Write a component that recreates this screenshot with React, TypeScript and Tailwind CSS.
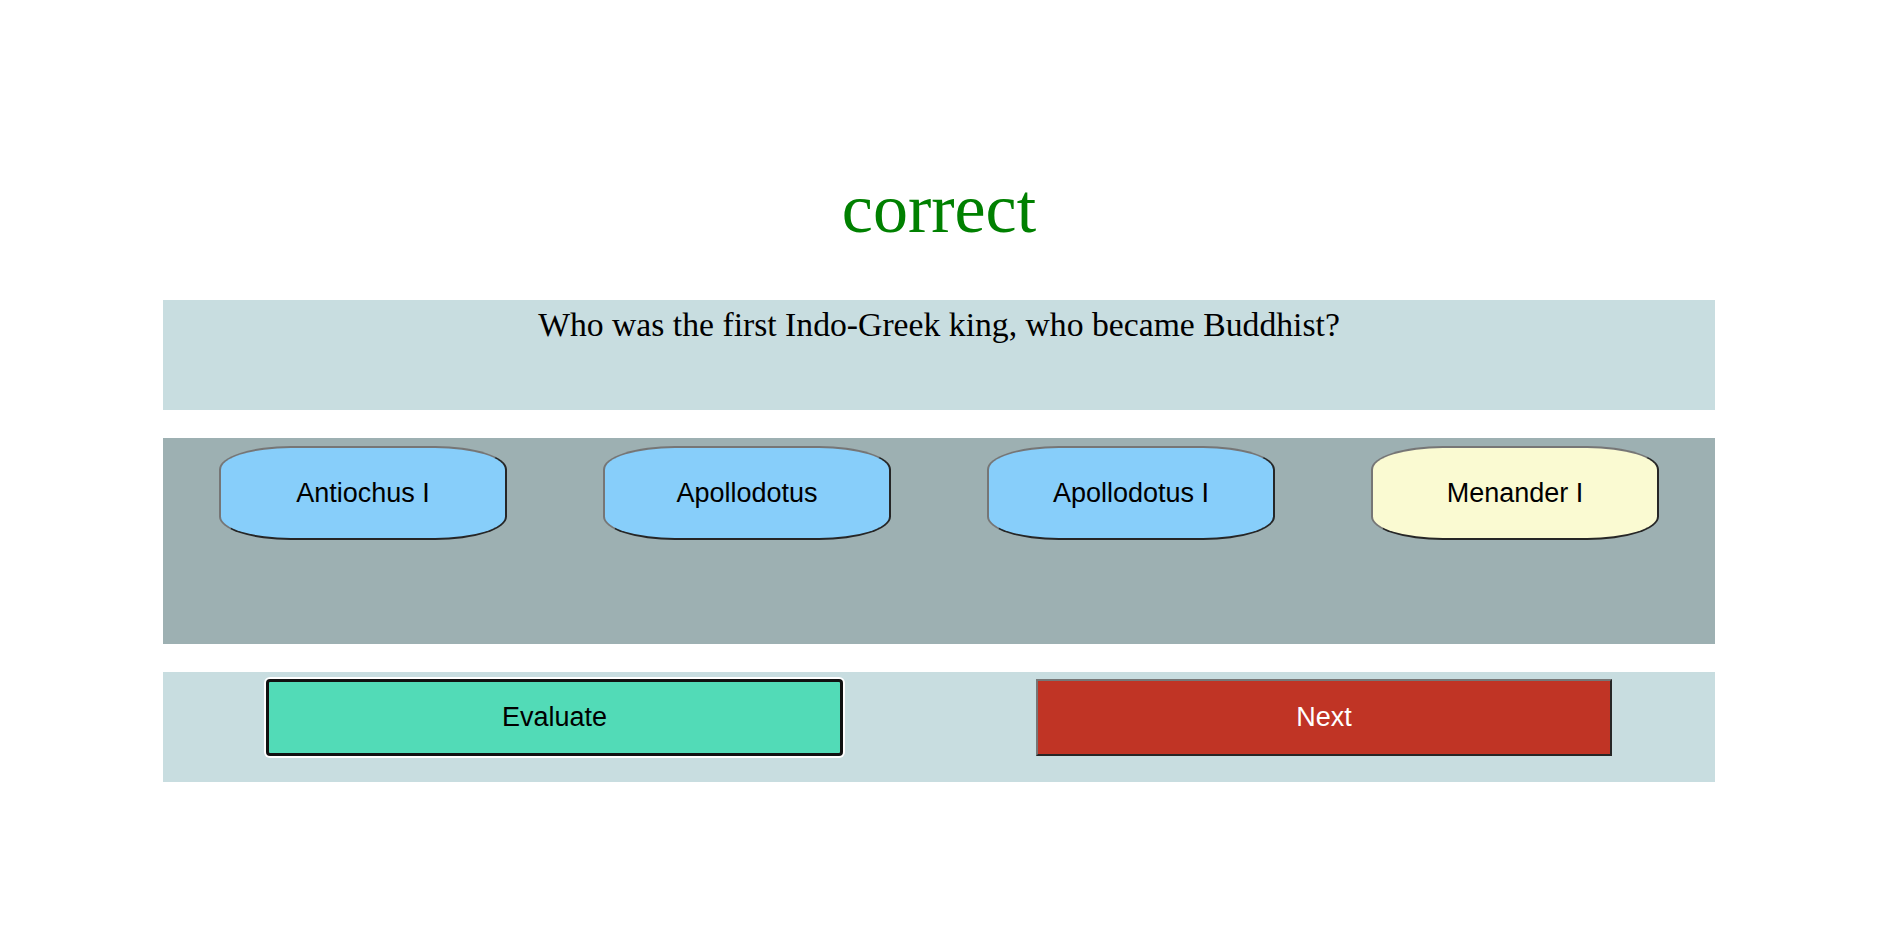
import React from "react";

const answers = [
  { label: "Antiochus I", bg: "bg-[#87cefa]" },
  { label: "Apollodotus", bg: "bg-[#87cefa]" },
  { label: "Apollodotus I", bg: "bg-[#87cefa]" },
  { label: "Menander I", bg: "bg-[#fafad2]" },
];

export default function App() {
  return (
    <div className="min-h-screen w-full bg-white">
      <div className="ml-[163px] w-[1552px] pt-[169px]">
        <h1 className="text-center text-[70px] leading-[80px] text-[#008000] font-['Liberation_Serif','Times_New_Roman',serif]">
          correct
        </h1>
        <div className="mt-[51px] h-[110px] bg-[#c8dde0] pt-[5px] text-center text-[33.7px] leading-[39px] text-black font-['Liberation_Serif','Times_New_Roman',serif]">
          Who was the first Indo-Greek king, who became Buddhist?
        </div>
        <div className="mt-[28px] flex h-[206px] items-start justify-between bg-[#9db0b2] px-[56px] pt-[8px]">
          {answers.map((a) => (
            <button
              key={a.label}
              className={`flex h-[94px] w-[288px] items-center justify-center rounded-[25%] border-2 border-t-[#767676] border-l-[#767676] border-r-[#262626] border-b-[#262626] ${a.bg} text-[27px] text-black font-['Liberation_Sans',Arial,sans-serif]`}
            >
              {a.label}
            </button>
          ))}
        </div>
        <div className="mt-[28px] flex h-[110px] items-start justify-between bg-[#c8dde0] pl-[103px] pr-[103px] pt-[7px]">
          <button className="flex h-[77px] w-[577px] items-center justify-center rounded-[4px] border-[3px] border-[#111] bg-[#52dbb7] text-[27px] text-black shadow-[0_0_0_2px_#ffffff] font-['Liberation_Sans',Arial,sans-serif]">
            Evaluate
          </button>
          <button className="flex h-[77px] w-[576px] items-center justify-center border-2 border-t-[#767676] border-l-[#767676] border-r-[#262626] border-b-[#262626] bg-[#c03425] text-[27px] text-white font-['Liberation_Sans',Arial,sans-serif]">
            Next
          </button>
        </div>
      </div>
    </div>
  );
}
